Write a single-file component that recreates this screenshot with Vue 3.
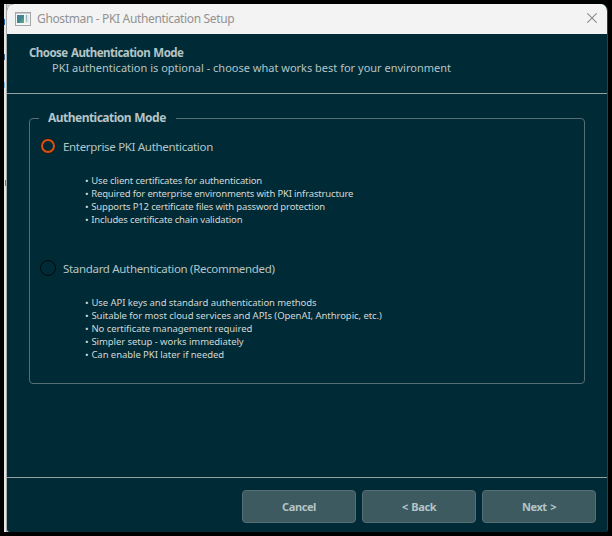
<script setup>
const modes = [
  {
    id: 'pki',
    label: 'Enterprise PKI Authentication',
    selected: true,
    points: [
      'Use client certificates for authentication',
      'Required for enterprise environments with PKI infrastructure',
      'Supports P12 certificate files with password protection',
      'Includes certificate chain validation',
    ],
  },
  {
    id: 'standard',
    label: 'Standard Authentication (Recommended)',
    selected: false,
    points: [
      'Use API keys and standard authentication methods',
      'Suitable for most cloud services and APIs (OpenAI, Anthropic, etc.)',
      'No certificate management required',
      'Simpler setup - works immediately',
      'Can enable PKI later if needed',
    ],
  },
]
const buttons = ['Cancel', '< Back', 'Next >']
</script>

<template>
  <div class="desktop">
    <div class="behind"><i class="m1"></i><i class="m2"></i><i class="m3"></i><i class="m4"></i></div>
    <main class="window">
      <header class="titlebar">
        <svg class="appicon" width="16" height="14" viewBox="0 0 16 14">
          <defs>
            <linearGradient id="pane" x1="0" y1="0" x2="1" y2="1">
              <stop offset="0" stop-color="#4a78a8" />
              <stop offset="0.5" stop-color="#3f8790" />
              <stop offset="1" stop-color="#63b078" />
            </linearGradient>
            <linearGradient id="side" x1="0" y1="0" x2="0" y2="1">
              <stop offset="0" stop-color="#8fa9c0" />
              <stop offset="1" stop-color="#a5cdb0" />
            </linearGradient>
          </defs>
          <rect x="0.5" y="0.5" width="15" height="13" fill="#f6f6f6" stroke="#a3a7ab" />
          <rect x="1" y="1" width="14" height="1" fill="#c9ccd0" />
          <rect x="2" y="3" width="7" height="8" fill="url(#pane)" />
          <rect x="10" y="3" width="4" height="8" fill="#e2e7e8" />
          <rect x="11" y="3" width="1" height="7" fill="url(#side)" />
        </svg>
        <span class="title">Ghostman - PKI Authentication Setup</span>
        <svg class="close" width="10" height="10" viewBox="0 0 10 10">
          <path d="M0.3 0.3L9.7 9.7M9.7 0.3L0.3 9.7" stroke="#8c8c8c" stroke-width="1.1" />
        </svg>
      </header>
      <section class="heading">
        <h1>Choose Authentication Mode</h1>
        <p>PKI authentication is optional - choose what works best for your environment</p>
      </section>
      <section class="content">
        <fieldset>
          <legend>Authentication Mode</legend>
          <div v-for="mode in modes" :key="mode.id" class="mode" :class="mode.id">
            <label class="choice">
              <span class="radio" :class="{ on: mode.selected }"></span>
              <span class="name">{{ mode.label }}</span>
            </label>
            <ul>
              <li v-for="point in mode.points" :key="point"><span class="dot">•</span> {{ point }}</li>
            </ul>
          </div>
        </fieldset>
      </section>
      <footer>
        <button v-for="b in buttons" :key="b" type="button">{{ b }}</button>
      </footer>
    </main>
  </div>
</template>

<style>
body { background: #000; overflow: hidden; }
</style>

<style scoped>
* { box-sizing: border-box; margin: 0; padding: 0; }
.desktop {
  width: 612px; height: 536px; padding: 4px; background: #000;
  display: flex; font-family: "Noto Sans", "Open Sans", sans-serif; color: #b5c4c6;
  white-space: nowrap;
}
.behind {
  width: 8px; height: 528px; margin-right: -5px; flex: none;
  background: linear-gradient(to right, #e6e6e6 0 2px, #a9abab 2px 3px, #d0d0d0 3px);
}
.behind i { display: block; width: 1px; height: 6px; }
.m1 { margin-top: 15px; background: #1f5fa8; }
.m2 { margin-top: 29px; background: #3a6488; }
.m3 { margin-top: 22px; background: #83bfe5; }
.m4 { margin-top: 92px; margin-left: 1px; background: #8a7364; }
.window {
  width: 601px; height: 528px; flex: none; background: #002b36;
  border-right: 1px solid #26434b; border-radius: 7px 7px 3px 3px;
  overflow: hidden; display: flex; flex-direction: column;
}
.titlebar {
  height: 30px; flex: none; background: #f3f3f3; display: flex; align-items: center;
  padding: 0 10px 0 8px;
}
.appicon { margin-top: -1px; }
.title { margin-left: 6px; font-size: 12px; line-height: 16px; color: #929292; letter-spacing: -0.35px; }
.close { margin-left: auto; margin-top: -2px; }
.heading {
  height: 60px; flex: none; padding: 10px 22px 0; border-bottom: 1px solid #93a1a1;
}
h1 { font-size: 11.5px; line-height: 17px; margin-bottom: -1px; font-weight: 700; letter-spacing: -0.53px; word-spacing: 0.8px; }
p { font-size: 11px; line-height: 16px; padding-left: 23px; }
.content { height: 383px; flex: none; padding: 14px 22px 0 22px; }
fieldset {
  height: 276px; border: 1px solid #586e75; border-radius: 4px;
  padding: 10px 0 0 10px; min-width: 0;
}
legend {
  font-size: 12px; line-height: 20px; font-weight: 700; margin-left: -1px;
  padding: 0 10px 0 9px; letter-spacing: -0.53px; word-spacing: 0.8px;
}
.mode { height: 122px; }
.choice { display: flex; align-items: center; height: 16px; }
.radio { width: 16px; height: 16px; border-radius: 50%; border: 1px solid #06090a; flex: none; }
.radio.on {
  width: 14px; height: 14px; margin: 0 1px; border: 2px solid #dc4f0c;
  box-shadow: 0 0 0 1px #1c1d1c;
}
.name { margin-left: 7px; font-size: 11.5px; line-height: 16px; margin-top: 2px; letter-spacing: -0.32px; }
ul { list-style: none; padding: 20px 0 0 45px; }
li { font-size: 9.5px; line-height: 13px; color: #d3d7d5; }
.dot { margin-right: 0.5px; }
.pki li { letter-spacing: -0.16px; }
.standard li { letter-spacing: -0.06px; }
footer {
  height: 55px; flex: none; border-top: 1px solid #93a1a1;
  display: flex; justify-content: flex-end; gap: 6px; padding: 12px 11px 0 0;
}
button {
  width: 114px; height: 33px; border: 1px solid #586e75; border-radius: 4px;
  background: #3c5a60; color: #b5c4c6; font: 700 11px/16px "Noto Sans", sans-serif;
  letter-spacing: -0.4px; word-spacing: 1px;
}
</style>
